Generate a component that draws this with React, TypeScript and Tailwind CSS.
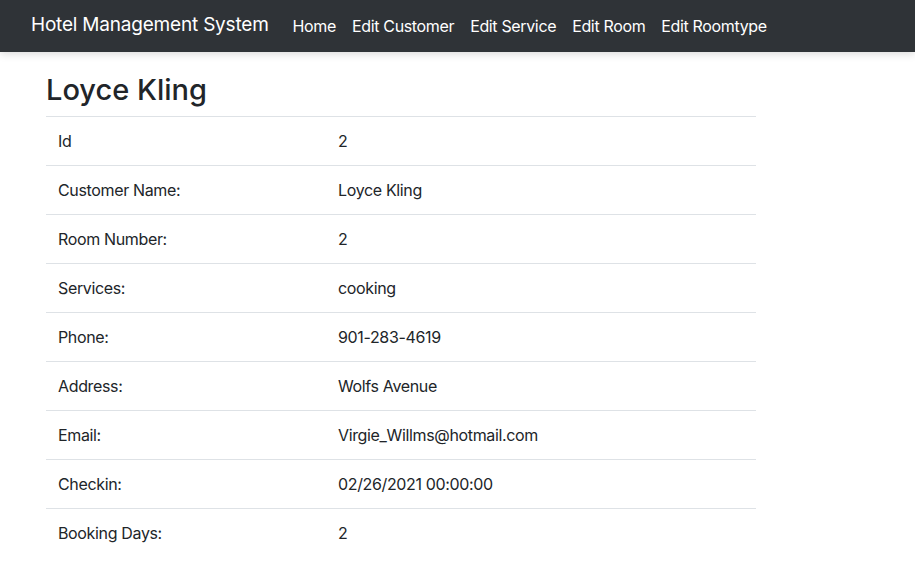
import React from "react";

const rows: [string, string][] = [
  ["Id", "2"],
  ["Customer Name:", "Loyce Kling"],
  ["Room Number:", "2"],
  ["Services:", "cooking"],
  ["Phone:", "901-283-4619"],
  ["Address:", "Wolfs Avenue"],
  ["Email:", "Virgie_Willms@hotmail.com"],
  ["Checkin:", "02/26/2021 00:00:00"],
  ["Booking Days:", "2"],
];

export default function App() {
  return (
    <div className="min-h-[583px] bg-white text-[#212529] font-['Inter','Noto_Sans',sans-serif] tracking-[-0.35px]">
      <nav className="h-[52px] bg-[#2f3337] flex items-center pl-[31px] pb-[1px] shadow-[0_2px_8px_rgba(0,0,0,0.15)]">
        <span className="text-white text-[19px] tracking-[-0.2px] mr-[16px]">Hotel Management System</span>
        <div className="flex text-[16px] text-white">
          {["Home", "Edit Customer", "Edit Service", "Edit Room", "Edit Roomtype"].map((l) => (
            <span key={l} className="px-[8px]">{l}</span>
          ))}
        </div>
      </nav>
      <div className="pl-[46px] pt-[21px]">
        <h2 className="text-[29px] font-medium leading-[1.2] mb-[8px] tracking-[0px]">Loyce Kling</h2>
        <table className="w-[710px] text-[16px] border-collapse">
          <tbody>
            {rows.map(([k, v]) => (
              <tr key={k} className="border-t border-[#dee2e6]">
                <td className="w-[280px] h-[49px] px-[12px] align-middle">{k}</td>
                <td className="h-[49px] px-[12px] align-middle">{v}</td>
              </tr>
            ))}
          </tbody>
        </table>
      </div>
    </div>
  );
}
